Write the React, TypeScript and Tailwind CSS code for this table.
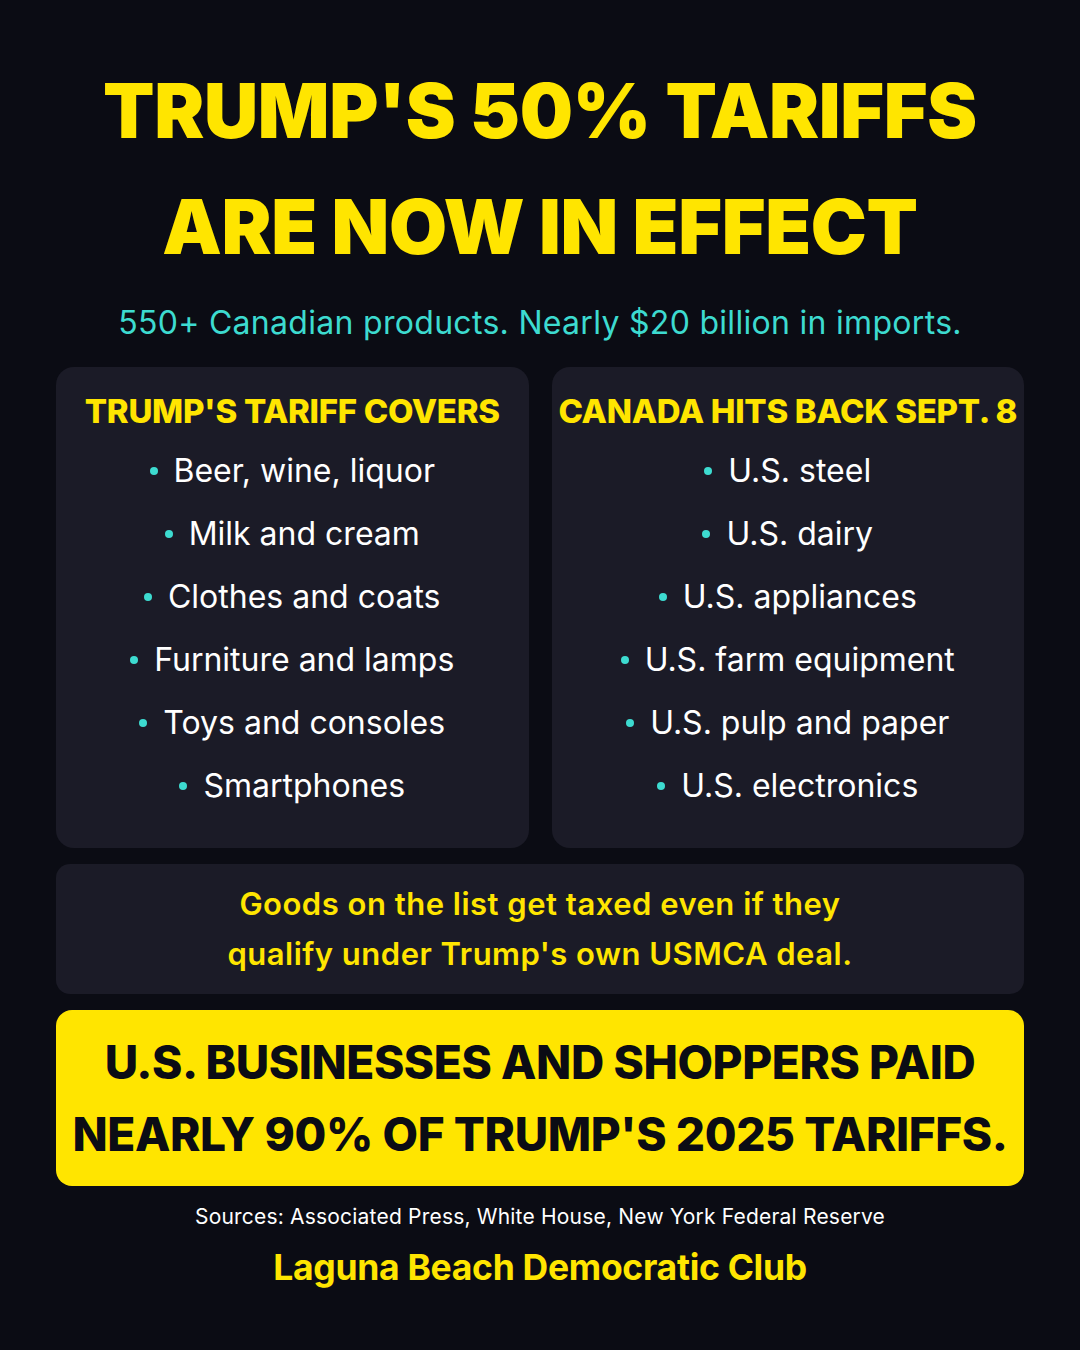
import React from 'react';

const covers = [
  'Beer, wine, liquor',
  'Milk and cream',
  'Clothes and coats',
  'Furniture and lamps',
  'Toys and consoles',
  'Smartphones',
];

const hitsBack = [
  'U.S. steel',
  'U.S. dairy',
  'U.S. appliances',
  'U.S. farm equipment',
  'U.S. pulp and paper',
  'U.S. electronics',
];

const font = { fontFamily: 'Inter, "Noto Sans", sans-serif' };

const ListCard: React.FC<{ title: string; items: string[] }> = ({ title, items }) => (
  <div className="flex-1 rounded-[18px] bg-[#1b1b27] pt-[22px] pb-[41px] flex flex-col items-center">
    <h2 className="text-[33px] font-extrabold text-[#ffe500] tracking-[-0.3px] leading-[44px] whitespace-nowrap">
      {title}
    </h2>
    <ul className="mt-[16px] flex flex-col gap-[20px]">
      {items.map((item) => (
        <li key={item} className="flex items-center justify-center gap-[16px] text-[32px] leading-[43px] text-white">
          <span className="w-[8px] h-[8px] rounded-full bg-[#3ddbd0]" />
          <span>{item}</span>
        </li>
      ))}
    </ul>
  </div>
);

export default function App() {
  return (
    <div style={font} className="w-[1080px] h-[1350px] bg-[#0b0c14] flex flex-col items-center px-[56px] pt-[53px]">
      <h1 className="text-center text-[75px] font-black text-[#ffe500] leading-[116px] tracking-[-0.3px]">
        TRUMP'S 50% TARIFFS
        <br />
        ARE NOW IN EFFECT
      </h1>
      <p className="mt-[16px] text-[32px] text-[#3ddbd0] leading-[44px] tracking-[0.3px]">
        550+ Canadian products. Nearly $20 billion in imports.
      </p>

      <div className="mt-[22px] w-full flex gap-[23px]">
        <ListCard title="TRUMP'S TARIFF COVERS" items={covers} />
        <ListCard title="CANADA HITS BACK SEPT. 8" items={hitsBack} />
      </div>

      <div className="mt-[16px] w-full rounded-[14px] bg-[#1b1b27] py-[15px] text-center">
        <p className="text-[31px] font-semibold text-[#ffe500] leading-[50px] tracking-[0.5px]">
          Goods on the list get taxed even if they
          <br />
          qualify under Trump's own USMCA deal.
        </p>
      </div>

      <div className="mt-[16px] w-full rounded-[16px] bg-[#ffe500] py-[16px] text-center">
        <p className="text-[46px] font-extrabold text-[#0b0c14] leading-[72px] tracking-[-0.4px]">
          U.S. BUSINESSES AND SHOPPERS PAID
          <br />
          NEARLY 90% OF TRUMP'S 2025 TARIFFS.
        </p>
      </div>

      <p className="mt-[16px] text-[21px] text-white leading-[30px] tracking-[0.2px]">
        Sources: Associated Press, White House, New York Federal Reserve
      </p>
      <p className="mt-[14px] text-[35.5px] font-bold text-[#ffe500] leading-[44px] tracking-[-0.3px]">
        Laguna Beach Democratic Club
      </p>
    </div>
  );
}
